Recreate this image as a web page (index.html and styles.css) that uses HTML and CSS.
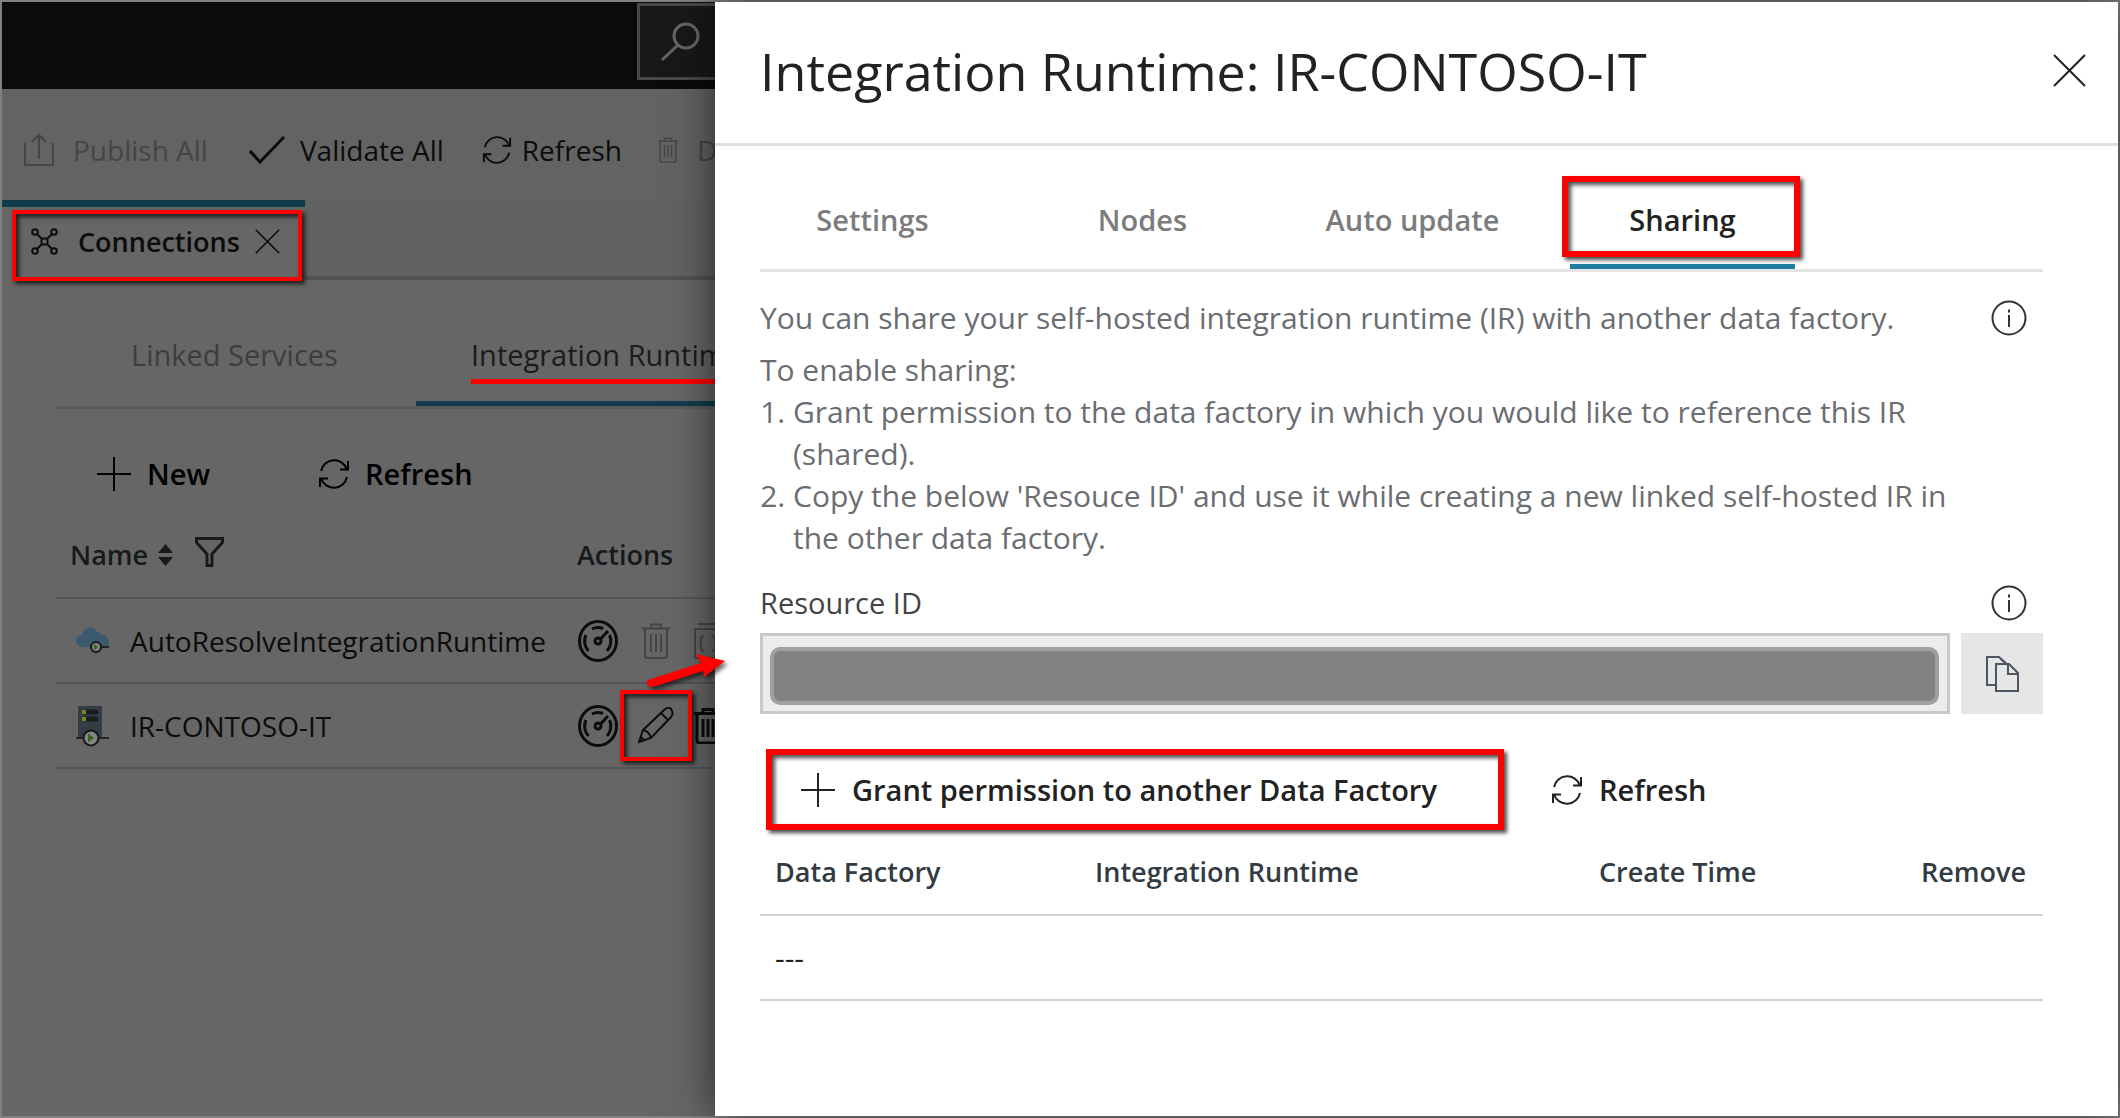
FILE: index.html
```html
<!DOCTYPE html>
<html lang="en">
<head>
<meta charset="utf-8">
<title>Integration Runtime: IR-CONTOSO-IT</title>
<link rel="stylesheet" href="styles.css">
</head>
<body>
<svg class="defs" aria-hidden="true">
  <symbol id="refresh" viewBox="0 0 32 32"><path d="M3 13A13.500 13.500 0 0 1 29 11.500M30 3v8.500h-8M29 19A13.500 13.500 0 0 1 3 20.500M2 29v-8.500h8"/></symbol>
  <symbol id="close" viewBox="0 0 32 32"><path d="M1 1l30 30M31 1L1 31"/></symbol>
  <symbol id="plus" viewBox="0 0 36 36"><path d="M18 1v34M1 18h34"/></symbol>
  <symbol id="info" viewBox="0 0 36 36"><circle cx="18" cy="18" r="16.500"/><path d="M18 15v12M18 9.500v3"/></symbol>
  <symbol id="trash" viewBox="0 0 28 36"><path d="M0 5.500h28M9 5V1.500h10V5M3 6v26q0 3 3 3h16q3 0 3-3V6M9 11v18M14 11v18M19 11v18"/></symbol>
  <symbol id="gauge" viewBox="0 0 40 42"><ellipse cx="20" cy="21" rx="18.500" ry="19.500"/><path d="M10.500 31A13.500 14 0 0 1 8 15M14 9a13 13 0 0 1 11-.5M31.500 15A13.500 14 0 0 1 29 31M22.500 19L30 11"/><circle cx="20" cy="21" r="3"/></symbol>
</svg>
<div class="app">
  <main class="factory">
    <header class="topbar">
      <button class="search" aria-label="Search"><svg width="40" height="40" viewBox="0 0 40 40"><circle cx="26" cy="14" r="12"/><path d="M18 23L2 38"/></svg></button>
    </header>
    <div class="toolbar">
      <button class="tool off"><svg width="30" height="34" viewBox="0 0 30 34"><path d="M1 10v22h28V10M15 26V2M8 9l7-7 7 7"/></svg>Publish All</button>
      <button class="tool validate"><svg class="bold" width="36" height="28" viewBox="0 0 36 28"><path d="M1 15l10 11L35 1"/></svg>Validate All</button>
      <button class="tool reload"><svg width="30" height="30"><use href="#refresh"/></svg>Refresh</button>
      <button class="tool off discard"><svg width="20" height="26"><use href="#trash"/></svg>Discard All</button>
    </div>
    <div class="doc-tabs">
      <div class="doc-tab">
        <svg width="27" height="27" viewBox="0 0 27 27"><path d="M6 6l5 5M21 6l-5 5M6 21l5-5M21 21l-5-5"/><rect x="10.500" y="10.500" width="6" height="6" rx="2"/><circle cx="4" cy="4" r="2.800"/><circle cx="23" cy="4" r="2.800"/><circle cx="4" cy="23" r="2.800"/><circle cx="23" cy="23" r="2.800"/></svg>
        <span>Connections</span>
        <button aria-label="Close Connections"><svg width="25" height="25"><use href="#close"/></svg></button>
        <i class="mark"></i>
      </div>
    </div>
    <section class="connections">
      <nav class="sub-tabs">
        <a href="#linked">Linked Services</a>
        <a href="#runtimes" class="current"><span>Integration Runtimes</span></a>
      </nav>
      <div class="commands">
        <button><svg width="36" height="36"><use href="#plus"/></svg>New</button>
        <button><svg width="32" height="32"><use href="#refresh"/></svg>Refresh</button>
      </div>
      <table class="runtimes">
        <thead>
          <tr><th class="name"><div class="cell">Name
            <svg class="solid" width="15" height="22" viewBox="0 0 15 22"><path d="M0 9L7.500 0 15 9zM0 13h15l-7.500 9z"/></svg>
            <svg class="filter" width="29" height="30" viewBox="0 0 29 30"><path d="M1.500 1.500h26v4L17 17v11.500h-5V17L1.500 5.500z"/></svg></div></th>
            <th>Actions</th></tr>
        </thead>
        <tbody>
          <tr><td><div class="cell item">
            <svg class="pic" width="34" height="42" viewBox="0 0 34 42"><path fill="#3b5a6f" d="M6 27a6 6 0 0 1 0-12 8 8 0 0 1 15-3q2-1 5 3a7 7 0 0 1 7 6v6z"/><path stroke="#252525" d="M14 27h19"/><circle cx="20" cy="27" r="5" fill="#858585" stroke="#181818" stroke-width="2"/><path fill="#35661b" d="M18 23.500v7l4-3.500z"/></svg>
            AutoResolveIntegrationRuntime</div></td>
            <td><div class="actions">
              <button aria-label="Monitor"><svg class="bold" width="40" height="42"><use href="#gauge"/></svg></button>
              <button aria-label="Delete" class="off"><svg width="28" height="36"><use href="#trash"/></svg></button>
              <button aria-label="Code" class="off"><svg width="28" height="36" viewBox="0 0 28 36"><path d="M4 1h24M1 6h26v29H1zM10 13q-3 0-3 3v2q0 2-2 2 2 0 2 3v2q0 3 3 3M18 13q3 0 3 3v2q0 2 2 2-2 0-2 3v2q0 3-3 3"/></svg></button>
            </div></td></tr>
          <tr><td><div class="cell item">
            <svg class="pic" width="34" height="42" viewBox="0 0 34 42"><path fill="#343d45" d="M2 1h24v32H2z"/><path stroke="#1c1c1c" stroke-width="5" stroke-linecap="round" d="M9 7h11M9 14h11"/><path fill="#78861c" d="M6 5h4v4H6zM6 12h4v4H6z"/><path stroke="#252525" stroke-width="2" d="M0 33h33"/><circle cx="15" cy="33" r="7.500" fill="#858585" stroke="#181818" stroke-width="2"/><path fill="#35661b" d="M12 28.500v9l6-4.500z"/></svg>
            IR-CONTOSO-IT</div></td>
            <td><div class="actions">
              <button aria-label="Monitor"><svg class="bold" width="40" height="42"><use href="#gauge"/></svg></button>
              <button aria-label="Edit" class="edit"><svg width="36" height="37" viewBox="0 0 36 37"><path d="M1 35l4-12L26 3q4-4 7-1 3 4 0 8L13 31zM5 23q6 1 8 8M23 6l7 7M1 35l5-2-3-3z"/></svg><i class="mark"></i></button>
              <button aria-label="Delete"><svg class="bold" width="28" height="36"><use href="#trash"/></svg></button>
            </div></td></tr>
        </tbody>
      </table>
    </section>
  </main>

  <aside class="panel">
    <header class="panel-head">
      <h1>Integration Runtime: IR-CONTOSO-IT</h1>
      <button aria-label="Close"><svg width="33" height="33"><use href="#close"/></svg></button>
    </header>
    <div class="panel-body">
      <nav class="tabs">
        <a href="#settings">Settings</a>
        <a href="#nodes">Nodes</a>
        <a href="#auto-update">Auto update</a>
        <a href="#sharing" class="current">Sharing<i class="mark"></i></a>
      </nav>
      <div class="intro">
        <p>You can share your self-hosted integration runtime (IR) with another data factory.</p>
        <svg class="info" width="36" height="36"><use href="#info"/></svg>
      </div>
      <p class="steps-title">To enable sharing:</p>
      <ol class="steps">
        <li>Grant permission to the data factory in which you would like to reference this IR (shared).</li>
        <li>Copy the below 'Resouce ID' and use it while creating a new linked self-hosted IR in the other data factory.</li>
      </ol>
      <div class="field-label">
        <label for="resource-id">Resource ID</label>
        <svg class="info" width="36" height="36"><use href="#info"/></svg>
      </div>
      <div class="field">
        <div class="field-box"><input id="resource-id" type="text" readonly></div>
        <button class="copy" aria-label="Copy"><svg width="33" height="36" viewBox="0 0 33 36"><path d="M10 29H1V1h12l5 5M10 8h13l9 9v18H10zM22 8v10h10M13 1l9 8"/></svg></button>
      </div>
      <div class="share-actions">
        <button class="grant"><svg width="36" height="36"><use href="#plus"/></svg>Grant permission to another Data Factory<i class="mark"></i></button>
        <button><svg width="32" height="32"><use href="#refresh"/></svg>Refresh</button>
      </div>
      <table class="shared">
        <thead><tr><th>Data Factory</th><th>Integration Runtime</th><th>Create Time</th><th>Remove</th></tr></thead>
        <tbody><tr><td colspan="4">---</td></tr></tbody>
      </table>
    </div>
  </aside>
  <svg class="arrow" width="90" height="44" viewBox="0 0 90 44"><path d="M6 29L59 12 54 3 83 10 62 26 61 20 14 35Q7 37 5 33 4 30 6 29z"/></svg>
</div>
</body>
</html>
```
FILE: styles.css
```css
* { box-sizing: border-box; }

body {
  margin: 0;
  font: 28px/42px "Open Sans", "Noto Sans", sans-serif;
}

h1, p, ol { margin: 0; padding: 0; }
a { color: inherit; text-decoration: none; }

button {
  display: inline-flex;
  align-items: center;
  padding: 0;
  border: 0;
  background: none;
  color: inherit;
  font: inherit;
  white-space: nowrap;
}

svg {
  flex: none;
  fill: none;
  stroke: currentColor;
  stroke-width: 2;
}

svg.bold { stroke-width: 3; }
svg.solid { fill: currentColor; stroke: none; }
svg.filter { stroke-width: 3; }
svg.pic { stroke: none; }
.defs { position: absolute; width: 0; height: 0; }

.app {
  position: relative;
  display: grid;
  grid-template-columns: 713fr 1403fr;
  min-height: 100vh;
  border: 2px solid #808080;
}

/* Red call-out frames laid over a control */
.mark {
  position: absolute;
  inset: 0;
  border: 4px solid #f00;
  box-shadow: 3px 3px 4px rgba(0, 0, 0, .7), inset 3px 3px 4px rgba(0, 0, 0, .7);
}

/* Dimmed page behind the panel */
.factory {
  min-width: 0;
  overflow: hidden;
  background: #666;
  color: #0c0c0c;
}

.off { color: #454545; }

.topbar {
  display: flex;
  justify-content: flex-end;
  height: 87px;
  padding-top: 1px;
  background: #0b0b0b;
}

.search {
  width: 78px;
  height: 77px;
  padding-left: 20px;
  border: 3px solid #494949;
  border-right: 0;
  background: #181818;
  color: #666;
}
.search svg { stroke-width: 3; }

.toolbar {
  display: flex;
  align-items: center;
  height: 111px;
  padding: 10px 0 0 22px;
  background: #636363;
}
.tool { gap: 15px; }
.toolbar .off { gap: 19px; }
.validate { margin-left: 41px; }
.toolbar .reload { gap: 10px; margin-left: 38px; }
.discard { margin-left: 36px; }

.doc-tabs {
  height: 80px;
  background: #626262;
  border-bottom: 4px solid #525252;
}

.doc-tab {
  position: relative;
  display: flex;
  align-items: center;
  width: 303px;
  height: 80px;
  padding: 0 0 4px 29px;
  border-top: 7px solid #103c4c;
  background: #666;
}
.doc-tab span { flex: 1; padding-left: 20px; font-size: 27px; font-weight: 600; }
.doc-tab button { margin-right: 25px; }
.doc-tab .mark { inset: 3px 3px -1px 10px; }

.connections { padding-left: 54px; }

.sub-tabs {
  display: flex;
  height: 129px;
  border-bottom: 3px solid #5b5b5b;
  color: #3d3d3d;
  font-size: 29px;
}
.sub-tabs a { flex: none; padding: 54px 0 0 75px; width: 360px; }
.sub-tabs .current {
  padding-left: 55px;
  border-bottom: 5px solid #103c4c;
  color: #1b1b1b;
}
.sub-tabs span {
  display: block;
  border-bottom: 5px solid #f00;
  padding-bottom: 3px;
}

.commands {
  display: flex;
  gap: 108px;
  padding: 44px 0 0 40px;
  color: #000;
  font-size: 29px;
  font-weight: 600;
}
.commands button { gap: 15px; }

table { border-collapse: collapse; text-align: left; }
th { font-size: 27px; font-weight: 600; }

.runtimes { width: 660px; margin-top: 18px; table-layout: fixed; }
.runtimes tr { height: 85px; border-bottom: 2px solid #555; color: #0c0c0c; }
.runtimes th { color: #161a1d; }
.runtimes th, .runtimes td { padding: 0; }
.name { width: 521px; }
.cell { display: flex; align-items: center; gap: 10px; padding-left: 14px; white-space: nowrap; }
.item { gap: 20px; padding-left: 20px; }
.filter { margin: -6px 0 0 12px; }
.actions { display: flex; align-items: center; gap: 24px; padding-left: 1px; }
.edit { position: relative; margin: 0 -4px; }
.edit .mark { inset: -17px -18px; }

/* Sharing panel */
.panel {
  position: relative;
  min-width: 0;
  background: #fff;
  color: #222;
  box-shadow: 0 0 40px rgba(0, 0, 0, .6);
}

.panel-head {
  display: flex;
  align-items: center;
  justify-content: space-between;
  height: 144px;
  padding: 0 32px 4px 45px;
  border-bottom: 3px solid #dfdfdf;
}
.panel-head h1 { font-size: 52px; font-weight: 400; line-height: 72px; }

.panel-body { padding: 0 75px 0 45px; font-size: 30px; }

.tabs {
  display: flex;
  gap: 45px;
  height: 126px;
  border-bottom: 3px solid #e4e4e4;
  color: #7c7c7c;
  font-size: 29px;
  font-weight: 600;
}
.tabs a { position: relative; flex: 0 1 225px; padding-top: 53px; text-align: center; }
.tabs .current { border-bottom: 5px solid #1f7d9f; color: #222; }
.tabs .mark { inset: 30px -5px 7px -8px; border-width: 6px; }

.intro, .field-label { display: flex; align-items: center; justify-content: space-between; }
.intro { height: 91px; color: #6a6d71; }
.info { margin-right: 16px; color: #333; }
.steps-title, .steps { color: #6a6d71; }
.steps-title { margin-top: -14px; }
.steps { padding: 0 80px 0 33px; }

.field-label { margin-top: 23px; padding-bottom: 9px; color: #444; font-size: 29px; }

.field { display: flex; gap: 11px; height: 81px; }
.field-box {
  flex: 1;
  padding: 11px 8px 6px 7px;
  border: 3px solid #c8c8c8;
  background: #ececec;
}
.field-box input {
  display: block;
  width: 100%;
  height: 58px;
  border: 4px solid #a0a0a0;
  border-radius: 10px;
  background: #828282;
}
.copy { justify-content: center; width: 82px; background: #e6e6e6; color: #4c5562; }

.share-actions { display: flex; gap: 47px; padding: 35px 0 0 6px; font-size: 29px; font-weight: 600; }
.share-actions button { gap: 16px; }
.share-actions .grant { position: relative; width: 738px; height: 81px; padding-left: 34px; }
.share-actions .mark { border-width: 6px; }

.shared { width: 100%; table-layout: fixed; }
.shared tr { border-bottom: 2px solid #cfcfcf; height: 85px; }
.shared th, .shared td { padding: 0 0 0 15px; }
.shared th { color: #333b42; }
.shared th:nth-child(1) { width: 320px; }
.shared th:nth-child(2) { width: 504px; }
.shared th:nth-child(3) { width: 322px; }

/* Call-out arrow from the edit button to the panel */
.arrow {
  position: absolute;
  left: 640px;
  top: 649px;
  fill: #f00;
  stroke: none;
  filter: drop-shadow(3px 3px 2px rgba(0, 0, 0, .6));
}
```
